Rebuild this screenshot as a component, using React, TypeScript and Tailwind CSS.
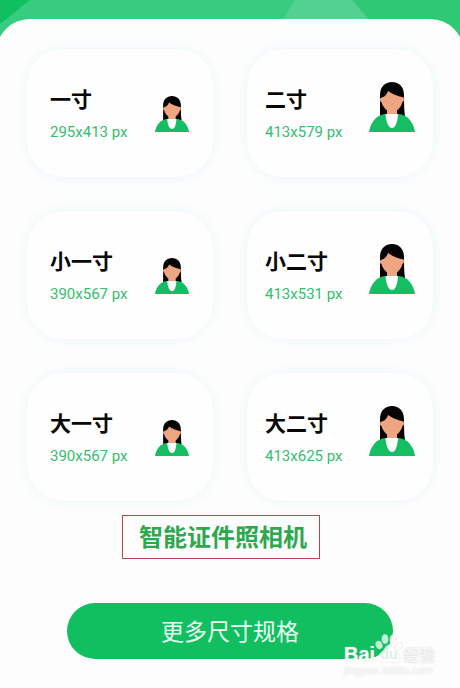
type PhotoSize = { name: string; pixels: string; large: boolean };

const sizes: PhotoSize[] = [
  { name: "一寸", pixels: "295x413 px", large: false },
  { name: "二寸", pixels: "413x579 px", large: true },
  { name: "小一寸", pixels: "390x567 px", large: false },
  { name: "小二寸", pixels: "413x531 px", large: true },
  { name: "大一寸", pixels: "390x567 px", large: false },
  { name: "大二寸", pixels: "413x625 px", large: true },
];

function Portrait({ large }: { large: boolean }) {
  return (
    <svg
      viewBox="0 0 46 50"
      preserveAspectRatio="none"
      className={large ? "h-[50px] w-[46px] shrink-0" : "h-9 w-[34px] shrink-0"}
      aria-hidden="true"
    >
      <path d="M11 34V13C11 5 16 0 23 0s12 5 12 13c0 8 0 15 1 21Z" fill="#050304" />
      <path
        d="M11.500 16c4-1 6-3 7.500-7 4 3 9 5 15.500 6.500 1 2 .5 4-1 4.500-1 4-3 6-5.500 8.500V34H18v-5.500c-2.500-2.500-4.500-4.500-5.500-8.500-1.500-.5-2-2-1-4Z"
        fill="#eea582"
      />
      <path d="M0 50C1 42 7 32 17 32h12c10 0 16 10 17 18Z" fill="#15be62" />
      <path d="M16.500 32h12.500c-.5 8-2.500 14-6 14s-6-6-6.500-14Z" fill="#fdfefe" />
    </svg>
  );
}

function SizeCard({ size }: { size: PhotoSize }) {
  return (
    <button
      type="button"
      className={`flex h-32 items-center justify-between rounded-[36px] bg-[#fefefe] text-left shadow-[0_0_10px_2px_#eef7fa] ${
        size.large ? "px-[18px]" : "pr-6 pl-[23px]"
      }`}
    >
      <span className="flex flex-col gap-2 pt-0.5 whitespace-nowrap">
        <span className="text-[21px] leading-7 font-bold text-[#080808]">{size.name}</span>
        <span className="font-[Roboto,'Liberation_Sans',sans-serif] text-[15px] leading-6 text-[#35bd70]">
          {size.pixels}
        </span>
      </span>
      <span className="mt-[33px] flex h-[50px] items-end self-start">
        <Portrait large={size.large} />
      </span>
    </button>
  );
}

function Watermark() {
  return (
    <div
      className="pointer-events-none absolute right-7 bottom-3 w-[92px] whitespace-nowrap text-white/80"
      aria-hidden="true"
    >
      <div className="flex h-10 items-end">
        <span className="font-['Liberation_Sans',sans-serif] text-xl leading-5 font-bold [text-shadow:0_0_1px_#dcdcdc]">
          Bai
        </span>
        <span className="relative flex h-10 w-7 shrink-0 items-end justify-center">
          <svg viewBox="0 0 28 40" className="absolute inset-0 h-10 w-7" aria-hidden="true">
            <g fill="#fff" fillOpacity="0.75" stroke="#e4e4e4" strokeWidth="0.6">
              <ellipse cx="4" cy="21" rx="3" ry="4" transform="rotate(-20 4 21)" />
              <ellipse cx="10" cy="15" rx="3" ry="4.500" />
              <ellipse cx="18" cy="15" rx="3" ry="4.500" transform="rotate(12 18 15)" />
              <ellipse cx="24" cy="22" rx="3" ry="4" transform="rotate(25 24 22)" />
              <path d="M14 21c4 0 5 4 8 7 3 2 4 6 2 9-2 3-6 1-10 1s-8 2-10-1c-2-4 0-7 3-9s3-7 7-7Z" />
            </g>
          </svg>
          <span className="relative font-['Liberation_Sans',sans-serif] text-sm leading-5 font-bold text-[#d4ebdd]/80">
            du
          </span>
        </span>
        <span className="text-base leading-5 text-[#fafafa] [text-shadow:0_0_2px_#c0c0c0]">经验</span>
      </div>
      <div className="font-['Liberation_Sans',sans-serif] text-[11px] leading-3 text-[#fafafa] [text-shadow:0_0_2px_#d4d4d4]">
        jingyan.baidu.com
      </div>
    </div>
  );
}

export default function App() {
  return (
    <div className="relative min-h-screen overflow-hidden bg-[#38cc80] pt-[19px] font-['Noto_Sans_CJK_SC',sans-serif]">
      <svg
        viewBox="0 0 460 60"
        preserveAspectRatio="none"
        className="absolute inset-x-0 top-0 h-[60px] w-full"
        aria-hidden="true"
      >
        <path d="M0 0h30L0 24Z" fill="#10bf60" />
        <path d="M295 0h57l53 60H258Z" fill="#53d191" />
        <path d="M352 0h108v60h-55Z" fill="#2fc875" />
      </svg>
      <main className="relative -mx-1 flex min-h-[calc(100vh-19px)] flex-col items-center rounded-t-[34px] bg-[#fdfdfd] px-[31px] pt-[30px] pb-[29px]">
        <div className="grid w-full grid-cols-2 gap-[34px]">
          {sizes.map((size) => (
            <SizeCard key={size.name} size={size} />
          ))}
        </div>
        <h1 className="mt-[14px] mr-[18px] flex h-11 items-center border border-[#b84450] pr-3 pb-0.5 pl-4 text-2xl leading-9 font-bold whitespace-nowrap text-[#2ea84f]">
          智能证件照相机
        </h1>
        <div className="mt-11 w-full px-10">
          <button
            type="button"
            className="h-14 w-full rounded-full bg-[#11bf61] pb-0.5 text-[23px] leading-8 text-[#e9fff2]"
          >
            更多尺寸规格
          </button>
        </div>
        <Watermark />
      </main>
    </div>
  );
}
